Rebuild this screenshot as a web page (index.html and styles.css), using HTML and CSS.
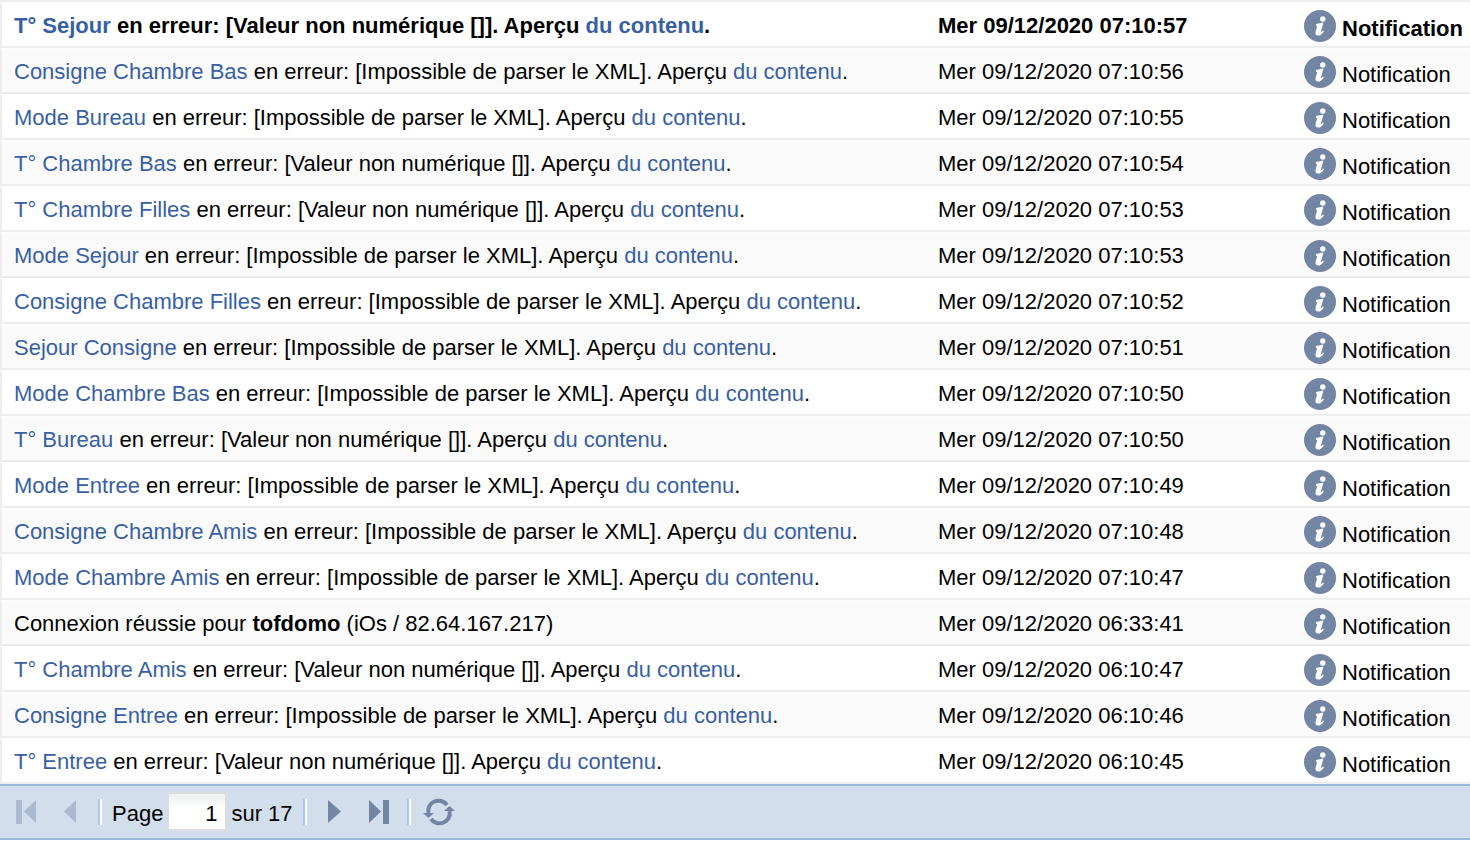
FILE: index.html
```html
<!DOCTYPE html>
<html lang="fr">
<head>
	<meta charset="UTF-8">
	<title>Notifications</title>
	<link rel="stylesheet" href="styles.css">
</head>
<body>
	<svg class="sprite" aria-hidden="true">
		<symbol id="info" viewBox="0 0 32 32">
			<circle cx="16" cy="16" r="16" fill="#7285a3"/>
			<circle cx="18.8" cy="9" r="2.7" fill="#fff"/>
			<path d="M12 14 L19.4 12.6 L17 21.4 Q16.8 22.6 17.8 21.8 L19 20.4 L20 21.2 Q17 25.8 14 25.6 Q10.800 25.300 11.500 22 L13 16.800 Q13.200 15.600 11.800 15.700 Z" fill="#fff"/>
		</symbol>
	</svg>
	<table class="list">
		<colgroup>
			<col>
			<col class="col-date">
			<col class="col-type">
		</colgroup>
		<tbody>
			<tr class="unread">
				<td><a href="#">T° Sejour</a> en erreur: [Valeur non numérique []]. Aperçu <a href="#">du contenu</a>.</td>
				<td>Mer 09/12/2020 07:10:57</td>
				<td><div class="type"><svg class="info"><use href="#info"/></svg><span>Notification</span></div></td>
			</tr>
			<tr>
				<td><a href="#">Consigne Chambre Bas</a> en erreur: [Impossible de parser le XML]. Aperçu <a href="#">du contenu</a>.</td>
				<td>Mer 09/12/2020 07:10:56</td>
				<td><div class="type"><svg class="info"><use href="#info"/></svg><span>Notification</span></div></td>
			</tr>
			<tr>
				<td><a href="#">Mode Bureau</a> en erreur: [Impossible de parser le XML]. Aperçu <a href="#">du contenu</a>.</td>
				<td>Mer 09/12/2020 07:10:55</td>
				<td><div class="type"><svg class="info"><use href="#info"/></svg><span>Notification</span></div></td>
			</tr>
			<tr>
				<td><a href="#">T° Chambre Bas</a> en erreur: [Valeur non numérique []]. Aperçu <a href="#">du contenu</a>.</td>
				<td>Mer 09/12/2020 07:10:54</td>
				<td><div class="type"><svg class="info"><use href="#info"/></svg><span>Notification</span></div></td>
			</tr>
			<tr>
				<td><a href="#">T° Chambre Filles</a> en erreur: [Valeur non numérique []]. Aperçu <a href="#">du contenu</a>.</td>
				<td>Mer 09/12/2020 07:10:53</td>
				<td><div class="type"><svg class="info"><use href="#info"/></svg><span>Notification</span></div></td>
			</tr>
			<tr>
				<td><a href="#">Mode Sejour</a> en erreur: [Impossible de parser le XML]. Aperçu <a href="#">du contenu</a>.</td>
				<td>Mer 09/12/2020 07:10:53</td>
				<td><div class="type"><svg class="info"><use href="#info"/></svg><span>Notification</span></div></td>
			</tr>
			<tr>
				<td><a href="#">Consigne Chambre Filles</a> en erreur: [Impossible de parser le XML]. Aperçu <a href="#">du contenu</a>.</td>
				<td>Mer 09/12/2020 07:10:52</td>
				<td><div class="type"><svg class="info"><use href="#info"/></svg><span>Notification</span></div></td>
			</tr>
			<tr>
				<td><a href="#">Sejour Consigne</a> en erreur: [Impossible de parser le XML]. Aperçu <a href="#">du contenu</a>.</td>
				<td>Mer 09/12/2020 07:10:51</td>
				<td><div class="type"><svg class="info"><use href="#info"/></svg><span>Notification</span></div></td>
			</tr>
			<tr>
				<td><a href="#">Mode Chambre Bas</a> en erreur: [Impossible de parser le XML]. Aperçu <a href="#">du contenu</a>.</td>
				<td>Mer 09/12/2020 07:10:50</td>
				<td><div class="type"><svg class="info"><use href="#info"/></svg><span>Notification</span></div></td>
			</tr>
			<tr>
				<td><a href="#">T° Bureau</a> en erreur: [Valeur non numérique []]. Aperçu <a href="#">du contenu</a>.</td>
				<td>Mer 09/12/2020 07:10:50</td>
				<td><div class="type"><svg class="info"><use href="#info"/></svg><span>Notification</span></div></td>
			</tr>
			<tr>
				<td><a href="#">Mode Entree</a> en erreur: [Impossible de parser le XML]. Aperçu <a href="#">du contenu</a>.</td>
				<td>Mer 09/12/2020 07:10:49</td>
				<td><div class="type"><svg class="info"><use href="#info"/></svg><span>Notification</span></div></td>
			</tr>
			<tr>
				<td><a href="#">Consigne Chambre Amis</a> en erreur: [Impossible de parser le XML]. Aperçu <a href="#">du contenu</a>.</td>
				<td>Mer 09/12/2020 07:10:48</td>
				<td><div class="type"><svg class="info"><use href="#info"/></svg><span>Notification</span></div></td>
			</tr>
			<tr>
				<td><a href="#">Mode Chambre Amis</a> en erreur: [Impossible de parser le XML]. Aperçu <a href="#">du contenu</a>.</td>
				<td>Mer 09/12/2020 07:10:47</td>
				<td><div class="type"><svg class="info"><use href="#info"/></svg><span>Notification</span></div></td>
			</tr>
			<tr>
				<td>Connexion réussie pour <b>tofdomo</b> (iOs / 82.64.167.217)</td>
				<td>Mer 09/12/2020 06:33:41</td>
				<td><div class="type"><svg class="info"><use href="#info"/></svg><span>Notification</span></div></td>
			</tr>
			<tr>
				<td><a href="#">T° Chambre Amis</a> en erreur: [Valeur non numérique []]. Aperçu <a href="#">du contenu</a>.</td>
				<td>Mer 09/12/2020 06:10:47</td>
				<td><div class="type"><svg class="info"><use href="#info"/></svg><span>Notification</span></div></td>
			</tr>
			<tr>
				<td><a href="#">Consigne Entree</a> en erreur: [Impossible de parser le XML]. Aperçu <a href="#">du contenu</a>.</td>
				<td>Mer 09/12/2020 06:10:46</td>
				<td><div class="type"><svg class="info"><use href="#info"/></svg><span>Notification</span></div></td>
			</tr>
			<tr>
				<td><a href="#">T° Entree</a> en erreur: [Valeur non numérique []]. Aperçu <a href="#">du contenu</a>.</td>
				<td>Mer 09/12/2020 06:10:45</td>
				<td><div class="type"><svg class="info"><use href="#info"/></svg><span>Notification</span></div></td>
			</tr>
		</tbody>
	</table>
	<div class="pager">
		<button type="button" aria-label="Première page" disabled>
			<svg viewBox="0 0 32 32"><path d="M6 4h6v24H6zM26 4v23L14 15.5z"/></svg>
		</button>
		<button type="button" aria-label="Page précédente" disabled>
			<svg viewBox="0 0 32 32"><path d="M22 4v23L10 15.5z"/></svg>
		</button>
		<span class="sep"></span>
		<div class="page">
			<label for="page">Page</label>
			<input type="text" id="page" value="1">
			<span>sur 17</span>
		</div>
		<span class="sep"></span>
		<button type="button" aria-label="Page suivante">
			<svg viewBox="0 0 32 32"><path d="M9 4v23L22 15.5z"/></svg>
		</button>
		<button type="button" aria-label="Dernière page">
			<svg viewBox="0 0 32 32"><path d="M6 4v23L18 15.5zM20 4h6v24h-6z"/></svg>
		</button>
		<span class="sep"></span>
		<button type="button" aria-label="Actualiser">
			<svg viewBox="0 0 32 32">
				<path class="arc" d="M5.5 17A10.300 10 0 0 1 24 9M26.500 15A10.300 10 0 0 1 8 23"/>
				<path d="M0 17h11l-5.500 5zM21 15h11l-5.500-5z"/>
			</svg>
		</button>
	</div>
</body>
</html>
```
FILE: styles.css
```css
*{ margin: 0; padding: 0; box-sizing: border-box;}
body{ background: #fff; color: #000; font: 22px/26px "Liberation Sans", Arial, sans-serif;}
a{ color: #385fa6; text-decoration: none;}
.sprite{ display: none;}

.list{ width: 100%; table-layout: fixed; border-collapse: separate; border-spacing: 0; border-top: 2px solid #ededed;}
.col-date{ width: 366px;}
.col-type{ width: 178px;}
.list td{ height: 46px; padding: 2px 0 0 12px; border-top: 2px solid #fff; border-bottom: 2px solid #ededed; white-space: nowrap; vertical-align: middle;}
.list td:first-child{ border-left: 2px solid #ededed;}
.list tr:nth-child(even){ background: #fafafa;}
.unread{ font-weight: bold;}
.type{ display: flex; align-items: center; gap: 6px;}
.type span{ padding-top: 6px;}
.info{ width: 32px; height: 32px;}

.pager{ display: flex; align-items: center; gap: 12px; padding: 6px 10px 7px; background: #d3deed; border-top: 2px solid #9ebae1; border-bottom: 2px solid #9ebae1;}
.pager button{ width: 32px; height: 32px; border: 0; background: none;}
.pager button svg{ display: block; width: 32px; height: 32px; fill: #7285a3;}
.pager button:disabled{ opacity: .4;}
.pager .arc{ fill: none; stroke: #7285a3; stroke-width: 4;}
.sep{ width: 4px; height: 26px; border-left: 2px solid #a6c7f9; border-right: 2px solid #fff;}
.page{ display: flex; align-items: center; gap: 4px; margin: 0 -2px;}
.page label, .page span{ padding-top: 4px;}
.page input{ width: 60px; height: 39px; padding: 4px 8px 0 0; border: 2px solid #ddd; background: linear-gradient(#eef1f1, #fff 16px); font: inherit; text-align: right;}
```
